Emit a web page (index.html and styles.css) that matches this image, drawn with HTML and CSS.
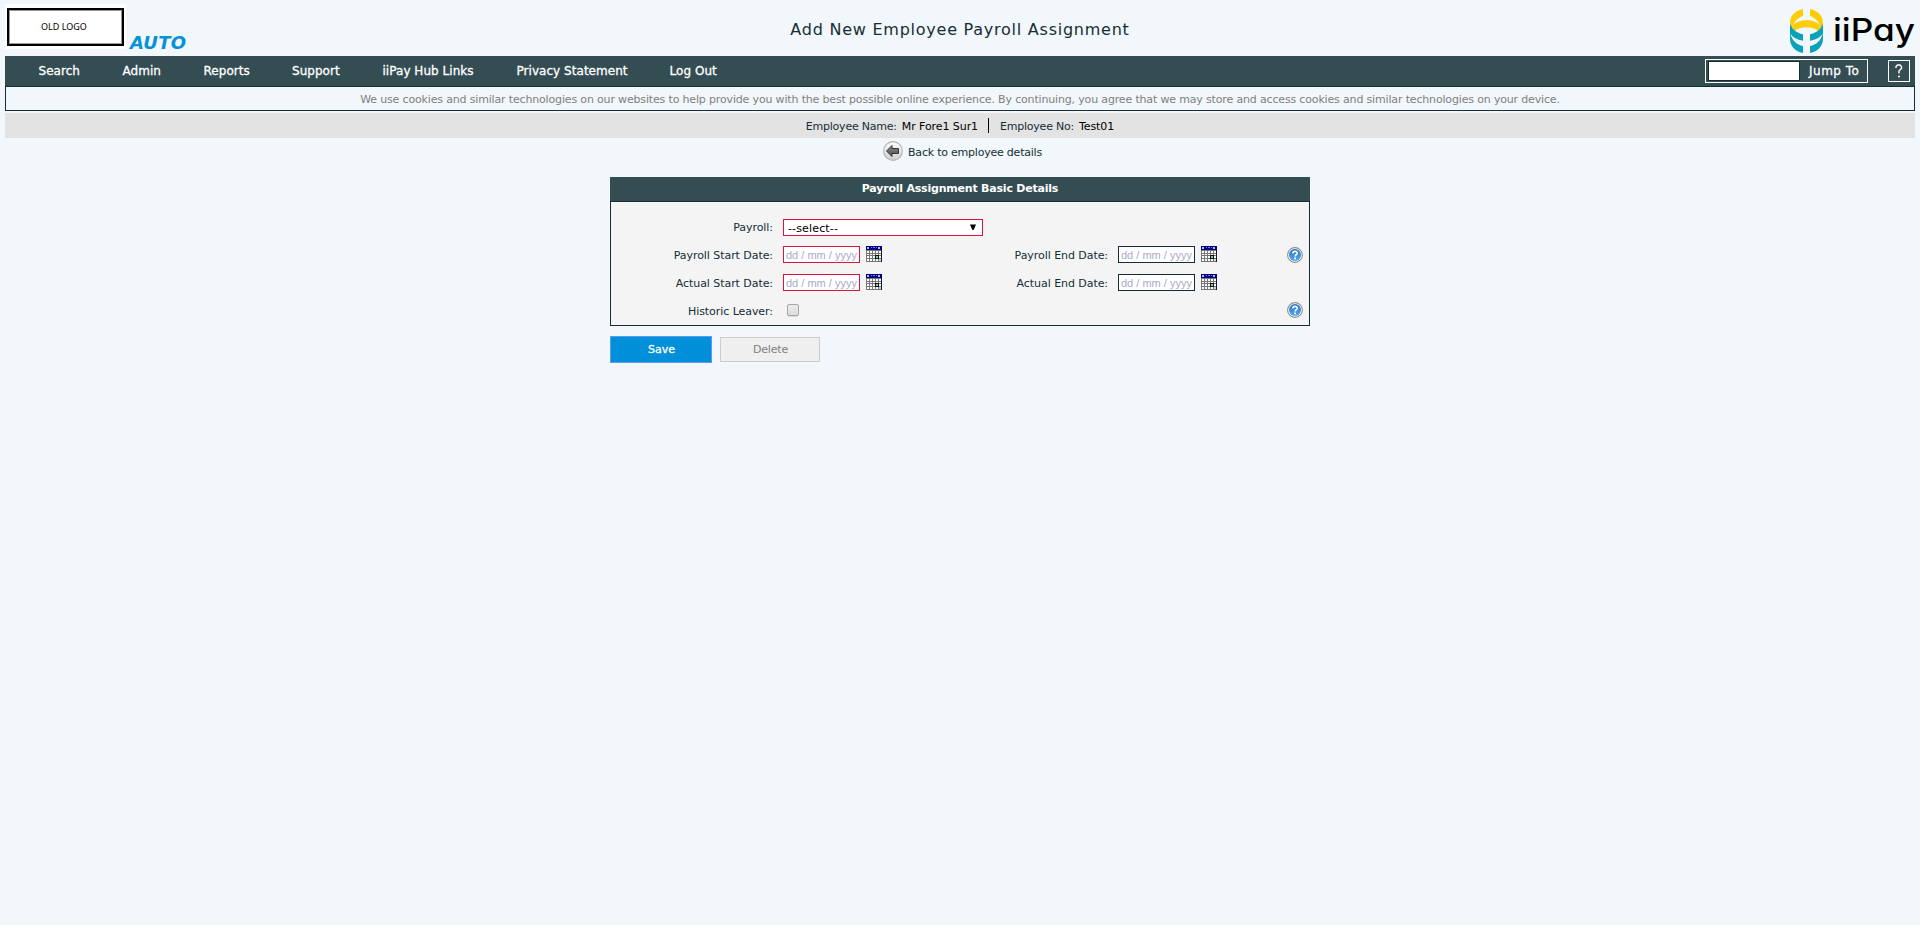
FILE: index.html
```html
<!DOCTYPE html>
<html lang="en">
<head>
<meta charset="utf-8">
<title>Add New Employee Payroll Assignment</title>
<link rel="stylesheet" href="styles.css">
</head>
<body>
<svg class="defs" width="0" height="0">
  <defs>
    <linearGradient id="blue" x1="0" y1="0" x2="0" y2="1"><stop offset="0" stop-color="#2272c4"/><stop offset="1" stop-color="#55aaf0"/></linearGradient>
    <linearGradient id="silver" x1="0" y1="0" x2="0" y2="1"><stop offset="0" stop-color="#ffffff"/><stop offset="1" stop-color="#cfcfcf"/></linearGradient>
    <linearGradient id="arrow" x1="0" y1="0" x2="0" y2="1"><stop offset="0" stop-color="#8a8a8a"/><stop offset="1" stop-color="#505050"/></linearGradient>
    <symbol id="cal" viewBox="0 0 16 16">
      <rect width="16" height="16" fill="#777"/>
      <g fill="#fff"><path d="M1 5h2v2H1zM4 5h2v2H4zM7 5h2v2H7zM10 5h2v2h-2zM13 5h2v2h-2zM1 8h2v1H1zM4 8h2v1H4zM7 8h2v1H7zM10 8h2v1h-2zM13 8h2v1h-2zM1 10h2v2H1zM4 10h2v2H4zM7 10h2v2H7zM13 10h2v2h-2zM1 13h2v2H1zM4 13h2v2H4zM7 13h2v2H7zM10 13h2v2h-2z"/></g>
      <path d="M13 13h2v2h-2z" fill="#e8d0d0"/>
      <rect width="16" height="4" fill="#000080"/>
      <path d="M1 1h2v2H1zM12 1h2v2h-2z" fill="#b9b9f0"/><path d="M5 1h1v1H5zM7 1h2v1H7zM10 1h1v1h-1z" fill="#7878d8"/>
      <rect x="9" y="9" width="4" height="4" fill="#111"/><rect x="10" y="10" width="2" height="2" fill="#5fe0b0"/>
      <path d="M15 4h1v12h-1z" fill="#1c1440"/>
    </symbol>
    <symbol id="help" viewBox="0 0 16 16">
      <circle cx="8" cy="8" r="7.4" fill="#fff" stroke="#8d8d8d" stroke-width="1.1"/>
      <circle cx="8" cy="8" r="6" fill="url(#blue)"/>
      <path d="M5.9 6.4C5.9 3.7 10.2 3.8 10.2 6.2C10.2 7.8 8.1 7.7 8.1 9.5" fill="none" stroke="#fff" stroke-width="1.6"/>
      <rect x="7.2" y="10.5" width="1.8" height="1.8" fill="#fff"/>
    </symbol>
  </defs>
</svg>
<header class="top">
  <div class="brand">
    <div class="oldlogo"><div class="oldlogo-frame">OLD LOGO</div></div>
    <span class="auto">AUTO</span>
  </div>
  <h1 class="title">Add New Employee Payroll Assignment</h1>
  <div class="iipay">
    <svg width="33" height="44" viewBox="330 27 99 132">
      <g fill="#fecd08">
        <path d="M369 27C345 32 330 48 330 68L334 84C342 66 352 54 369 48Z"/>
        <path d="M390 27C414 32 429 48 429 68L425 84C417 66 407 54 390 48Z"/>
        <path d="M335 78C346 66 362 60 379.500 60C397 60 413 66 424 78L416 94C405 85 393 82 379.500 82C366 82 354 85 343 94Z"/>
      </g>
      <g fill="#0aa2b8">
        <path d="M330 70C336 88 349 99 369 103V122C351 119 338 112 331 101C337 122 350 134 369 138V159C345 154 330 138 330 116Z"/>
        <path d="M429 70C423 88 410 99 390 103V122C408 119 421 112 428 101C422 122 409 134 390 138V159C414 154 429 138 429 116Z"/>
      </g>
    </svg>
    <svg class="wordmark" width="82" height="44" viewBox="0 0 82 44"><text x="0" y="32" textLength="82" lengthAdjust="spacingAndGlyphs">iiPay</text></svg>
  </div>
</header>
<nav class="nav">
  <div class="menu">
    <a class="m1">Search</a><a class="m2">Admin</a><a class="m3">Reports</a><a class="m4">Support</a><a class="m5">iiPay Hub Links</a><a class="m6">Privacy Statement</a><a class="m7">Log Out</a>
  </div>
  <div class="jump"><span class="jump-input"></span><span class="jump-label">Jump To</span></div>
  <div class="qbox"><svg width="8" height="14" viewBox="0 0 8 14"><path d="M1 4V2.500L2.500 1H5L6.500 2.500V4.500L4 7V9.500M3 12.500H5" fill="none" stroke="#fff" stroke-width="1.400"/></svg></div>
</nav>
<div class="cookie">We use cookies and similar technologies on our websites to help provide you with the best possible online experience. By continuing, you agree that we may store and access cookies and similar technologies on your device.</div>
<div class="employee">
  <span>Employee Name:</span><b>Mr Fore1 Sur1</b><i class="bar"></i><span>Employee No:</span><b>Test01</b>
</div>
<div class="back">
  <svg width="20" height="20" viewBox="0 0 20 20"><circle cx="10" cy="10" r="9.300" fill="url(#silver)" stroke="#b4b4b4" stroke-width="1.200"/><path d="M3.500 10L9 4.500V7.500H15.500V12.500H9V15.500Z" fill="url(#arrow)" stroke="#333" stroke-width="1"/></svg>
  <span>Back to employee details</span>
</div>
<main class="main">
  <section class="panel">
    <h2 class="panel-title">Payroll Assignment Basic Details</h2>
    <div class="rows">
      <div class="row"><label>Payroll:</label><div class="select"><span>--select--</span><svg width="6" height="7" viewBox="0 0 6 7"><path d="M0 0.500H6L3.600 6H2.400Z"/></svg></div></div>
      <div class="row"><label>Payroll Start Date:</label><div class="date req">dd / mm / yyyy</div><svg class="cal"><use href="#cal"/></svg><label class="end">Payroll End Date:</label><div class="date">dd / mm / yyyy</div><svg class="cal"><use href="#cal"/></svg><svg class="help low"><use href="#help"/></svg></div>
      <div class="row"><label>Actual Start Date:</label><div class="date req">dd / mm / yyyy</div><svg class="cal"><use href="#cal"/></svg><label class="end">Actual End Date:</label><div class="date">dd / mm / yyyy</div><svg class="cal"><use href="#cal"/></svg></div>
      <div class="row"><label>Historic Leaver:</label><span class="check"></span><svg class="help"><use href="#help"/></svg></div>
    </div>
  </section>
  <div class="buttons"><div class="save">Save</div><div class="delete">Delete</div></div>
</main>
</body>
</html>
```
FILE: styles.css
```css
* { box-sizing: border-box; }
body { margin: 0 5px; background: #f1f7fa; color: #152e35; font: 11px "DejaVu Sans", Verdana, sans-serif; letter-spacing: -0.16px; }
svg { display: block; flex: none; }
.defs { position: absolute; }

.top { height: 56px; display: grid; grid-template-columns: 1fr auto 1fr; }
.brand { display: flex; }
.oldlogo { width: 121px; height: 45px; margin-top: 4px; padding: 4px 2px 3px; background: #fff; }
.oldlogo-frame { height: 38px; border: 2px solid #000; box-shadow: inset 0 0 0 1px #999; text-align: center; font: 9px/33px "Noto Sans", sans-serif; letter-spacing: 0; color: #000; padding-right: 3px; }
.auto { margin: 28px 0 0 4px; font-size: 18px; line-height: 29px; font-weight: bold; font-style: italic; letter-spacing: 0.22px; color: #0592d8; }
.title { margin: 0; font-size: 16px; font-weight: normal; line-height: 59px; letter-spacing: 0.757px; }
.iipay { display: flex; justify-content: flex-end; padding-top: 9px; }
.wordmark { margin-left: 10px; overflow: visible; }
.wordmark text { font: 500 31px Inter, sans-serif; font-feature-settings: "cv11", "ss03"; letter-spacing: 0; fill: #000; }

.nav { height: 30px; display: flex; background: #344d53; color: #fff; }
.menu { flex: 1; display: flex; padding-left: 33.500px; font-size: 12px; line-height: 30px; letter-spacing: 0.04px; -webkit-text-stroke: 0.3px #fff; }
.menu a { flex: none; }
.m1 { width: 84px; }
.m2 { width: 81px; }
.m3 { width: 88.5px; }
.m4 { width: 90.500px; }
.m5 { width: 134px; }
.m6 { width: 153px; }
.jump { width: 163px; height: 24px; margin-top: 3px; border: 1px solid #fff; padding: 1px 0 0 2px; display: flex; }
.jump-input { width: 92px; height: 20px; border: 1px solid #152e35; background: #fff; }
.jump-label { margin-left: 9px; font-size: 12px; line-height: 20px; letter-spacing: 0.5px; -webkit-text-stroke: 0.3px #fff; }
.qbox { width: 22px; height: 22px; margin: 4px 5px 0 20px; border: 1px solid #fff; display: flex; align-items: center; justify-content: center; }

.cookie { height: 25px; border: 1px solid #152e35; padding-top: 1px; line-height: 23px; text-align: center; color: #808080; letter-spacing: -0.161px; white-space: nowrap; }
.employee { height: 25px; margin-top: 2px; background: #e3e3e3; display: flex; justify-content: center; line-height: 27px; letter-spacing: -0.22px; }
.employee b { font-weight: normal; color: #000; margin-left: 5px; letter-spacing: -0.08px; }
.bar { width: 1px; height: 15px; margin: 5px 11px 0 10px; background: #000; }
.back { display: flex; justify-content: center; padding: 3px 0 0 5px; height: 39px; line-height: 23px; letter-spacing: -0.22px; }
.back span { margin-left: 5px; }

.main { width: 700px; margin: 0 auto; }
.panel { height: 149px; border: 1px solid #152e35; border-top: 0; background: #f4f4f4; }
.panel-title { margin: 0 -1px; height: 25px; background: #344d53; border-bottom: 1px solid #152e35; color: #fff; text-align: center; font-size: 11px; line-height: 23px; letter-spacing: -0.21px; }
.rows { padding-top: 11px; }
.row { height: 28px; display: flex; align-items: flex-start; }
.row label { width: 162px; margin-right: 10px; text-align: right; line-height: 29px; letter-spacing: -0.06px; }
.row .end { width: 226px; }
.select { width: 200px; height: 17px; margin-top: 6px; border: 1px solid #dc143c; background: #fff; color: #000; display: flex; justify-content: space-between; padding: 4px 6px 0 4px; letter-spacing: 0.15px; }
.select span { line-height: 9px; }
.date { width: 77px; height: 17px; margin-top: 5px; border: 1px solid #152e35; background: #fff; padding: 1px 0 0 2px; color: #a9aacb; font: 11px/15px "Liberation Sans", Arial, sans-serif; letter-spacing: 0; white-space: nowrap; }
.req { border-color: #dc143c; }
.cal { width: 16px; height: 16px; margin: 5px 0 0 6px; }
.help { width: 16px; height: 16px; margin: 5px 6px 0 auto; }
.low { margin-top: 6px; }
.check { width: 12px; height: 12px; margin: 7px 0 0 4px; border: 1px solid #a6a6a6; border-radius: 2px; background: linear-gradient(#ececec, #dcdcdc); box-shadow: 0 1px 0 #ddd; }
.buttons { display: flex; align-items: flex-start; margin-top: 10px; text-align: center; }
.save { width: 102px; height: 27px; padding-left: 1px; border: 1px solid #5c9cf0; background: #0090d9; color: #fff; line-height: 25px; letter-spacing: 0; -webkit-text-stroke: 0.3px #fff; }
.delete { width: 100px; height: 25px; margin: 1px 0 0 8px; padding-left: 1px; border: 1px solid #ccc; background: #efefef; color: #808080; line-height: 23px; letter-spacing: -0.2px; }
```
